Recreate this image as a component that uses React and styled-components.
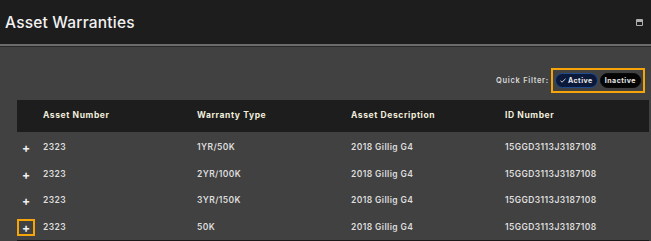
import React from 'react';
import styled, { createGlobalStyle } from 'styled-components';

const GlobalStyle = createGlobalStyle`
    html, body {
        margin: 0;
        padding: 0;
        background: #414141;
        overflow: hidden;
    }
    body {
        font-family: Inter, "Liberation Sans", sans-serif;
    }
`;

const Page = styled.div`
    width: 651px;
    height: 241px;
    background: #414141;
    overflow: hidden;
`;

const TitleBar = styled.header`
    height: 44px;
    background: #1d1d1d;
    display: flex;
    align-items: center;
    padding: 0 5px;
    border-bottom: 2px solid #6b6b6b;
    box-shadow: 0 1px 0 #2a2a2a;
`;

const Title = styled.h1`
    margin: 0;
    font-size: 15.5px;
    font-weight: 500;
    color: #f2f2f2;
    letter-spacing: 0.2px;
`;

const Spacer = styled.div`
    flex-grow: 1;
`;

const WindowIcon = styled.span`
    width: 7px;
    height: 7px;
    border: 1px solid #b0b0b0;
    border-top-width: 3px;
    border-radius: 1px;
    box-sizing: border-box;
    margin-right: 3px;
`;

const Content = styled.div`
    padding: 21px 2px 0 17px;
`;

const FilterRow = styled.div`
    display: flex;
    justify-content: flex-end;
    align-items: center;
    gap: 2px;
    padding-right: 4px;
    height: 27px;
    margin-bottom: 6px;
`;

const FilterLabel = styled.span`
    font-size: 7.5px;
    font-weight: 600;
    color: #d8d8d8;
    letter-spacing: 0.7px;
`;

const FilterGroup = styled.div`
    display: flex;
    gap: 2px;
    padding: 3px 2px;
    border: 2px solid #f5a50a;
`;

const Pill = styled.button`
    font-family: inherit;
    font-size: 7px;
    font-weight: 700;
    letter-spacing: 0.5px;
    color: #e8e8e8;
    height: 15px;
    padding: 0 4px;
    border-radius: 8px;
    border: 1px solid ${p => (p.$on ? '#1f4b8f' : '#0a0a0a')};
    background: ${p => (p.$on ? '#0b1a3b' : '#050505')};
    display: flex;
    align-items: center;
    gap: 2px;
`;

const Table = styled.table`
    width: 632px;
    border-collapse: collapse;
    table-layout: fixed;
`;

const HeadRow = styled.tr`
    background: #1d1d1d;
    height: 32px;
`;

const Th = styled.th`
    text-align: left;
    font-size: 8.5px;
    font-weight: 700;
    color: #f1eedc;
    letter-spacing: 0.6px;
    padding: 0 0 2px 0;
`;

const Row = styled.tr`
    height: ${p => p.$h}px;
`;

const Td = styled.td`
    font-size: 8.5px;
    font-weight: 600;
    color: #dedede;
    letter-spacing: 0.4px;
    padding: 0;
`;

const ExpandCell = styled.td`
    padding: 0;
`;

const Expand = styled.span`
    display: flex;
    align-items: center;
    justify-content: center;
    width: 18px;
    height: 17px;
    color: #f0f0f0;
    font-size: 12px;
    font-weight: 700;
    box-sizing: border-box;
    border: 2px solid ${p => (p.$focus ? '#f5a50a' : 'transparent')};
`;

const Footer = styled.div`
    height: 6px;
    background: #1a1a1a;
    width: 632px;
`;

const rows = [
    ['2323', '1YR/50K', '2018 Gillig G4', '15GGD3113J3187108', 30],
    ['2323', '2YR/100K', '2018 Gillig G4', '15GGD3113J3187108', 24],
    ['2323', '3YR/150K', '2018 Gillig G4', '15GGD3113J3187108', 28],
    ['2323', '50K', '2018 Gillig G4', '15GGD3113J3187108', 26],
];

export default function App() {
    return (
        <Page>
            <GlobalStyle />
            <TitleBar>
                <Title>Asset Warranties</Title>
                <Spacer />
                <WindowIcon />
            </TitleBar>
            <Content>
                <FilterRow>
                    <FilterLabel>Quick Filter:</FilterLabel>
                    <FilterGroup>
                        <Pill $on>
                            <svg width="6" height="5" viewBox="0 0 6 5">
                                <path d="M0.5 2.8 L2 4.2 L5.5 0.8" stroke="#e8e8e8" strokeWidth="0.9" fill="none" />
                            </svg>
                            Active
                        </Pill>
                        <Pill>Inactive</Pill>
                    </FilterGroup>
                </FilterRow>
                <Table>
                    <colgroup>
                        <col style={{ width: 26 }} />
                        <col style={{ width: 154 }} />
                        <col style={{ width: 154 }} />
                        <col style={{ width: 154 }} />
                        <col />
                    </colgroup>
                    <thead>
                        <HeadRow>
                            <Th />
                            <Th>Asset Number</Th>
                            <Th>Warranty Type</Th>
                            <Th>Asset Description</Th>
                            <Th>ID Number</Th>
                        </HeadRow>
                    </thead>
                    <tbody>
                        {rows.map((r, i) => (
                            <Row key={i} $h={r[4]}>
                                <ExpandCell>
                                    <Expand $focus={i === rows.length - 1}>+</Expand>
                                </ExpandCell>
                                <Td>{r[0]}</Td>
                                <Td>{r[1]}</Td>
                                <Td>{r[2]}</Td>
                                <Td>{r[3]}</Td>
                            </Row>
                        ))}
                    </tbody>
                </Table>
                <Footer />
            </Content>
        </Page>
    );
}
